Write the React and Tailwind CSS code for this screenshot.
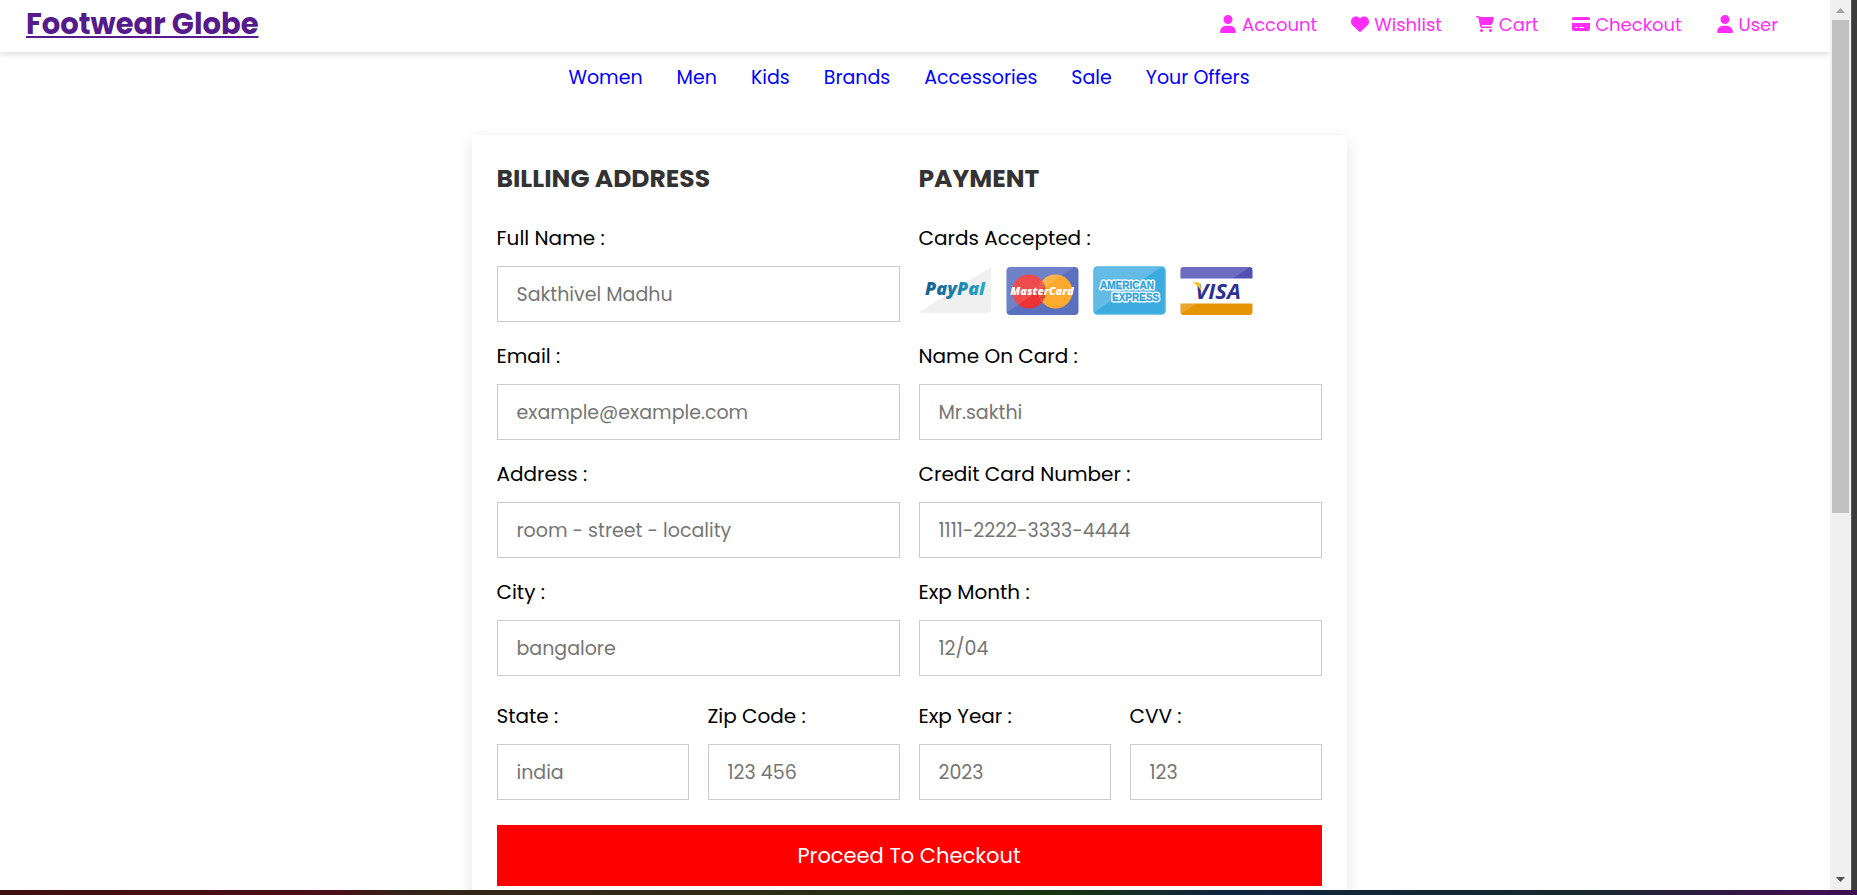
import React from "react";
import { FaUser, FaHeart, FaCartShopping, FaCreditCard } from "react-icons/fa6";

const ACCOUNT_LINKS = [
  { label: "Account", Icon: FaUser },
  { label: "Wishlist", Icon: FaHeart },
  { label: "Cart", Icon: FaCartShopping },
  { label: "Checkout", Icon: FaCreditCard },
  { label: "User", Icon: FaUser },
];

const CATEGORIES = ["Women", "Men", "Kids", "Brands", "Accessories", "Sale", "Your Offers"];

function Field({ id, label, placeholder, type = "text" }) {
  return (
    <div className="flex min-w-0 flex-1 flex-col gap-[13px]">
      <label htmlFor={id} className="text-[20px] leading-[30px] text-black">
        {label}
      </label>
      <input
        id={id}
        type={type}
        placeholder={placeholder}
        className="h-14 w-full border border-[#ccc] bg-white px-[19px] text-[19px] text-black outline-none placeholder:text-[#757575]"
      />
    </div>
  );
}

function PayPal() {
  return (
    <svg viewBox="0 0 73 49" className="h-[49px] w-[73px]" role="img" aria-label="PayPal">
      <defs>
        <linearGradient id="pp" x1="0" x2="1" y1="0" y2="0">
          <stop offset="0" stopColor="#17608f" />
          <stop offset="0.5" stopColor="#1b7fab" />
          <stop offset="1" stopColor="#28a9c9" />
        </linearGradient>
      </defs>
      <path d="M72 1V43a4 4 0 0 1-4 4H4Q2 47 1 45.500Z" fill="#f0f0f0" />
      <text x="36" y="29" textAnchor="middle" fontFamily="Open Sans, sans-serif" fontStyle="italic" fontWeight="800" fontSize="18" fill="url(#pp)">
        PayPal
      </text>
    </svg>
  );
}

function MasterCard() {
  return (
    <svg viewBox="0 0 73 49" className="h-[49px] w-[73px]" role="img" aria-label="MasterCard">
      <defs>
        <clipPath id="mcClip">
          <rect x="0.500" y="1" width="72" height="48" rx="4" />
        </clipPath>
      </defs>
      <g clipPath="url(#mcClip)">
        <rect width="73" height="49" fill="#5a70bf" />
        <circle cx="23" cy="25.500" r="17" fill="#eb3234" />
        <circle cx="49.500" cy="25.500" r="17" fill="#ffa92e" />
        <path d="M36.200 15a17 17 0 0 1 0 21a17 17 0 0 1 0-21Z" fill="#e0523a" />
        <path d="M33.500 19.500h5.500M33 22h6.500M33 29h6.500M33.500 31.500h5.500" stroke="#c93a35" strokeWidth="0.800" />
        <path d="M0 0H70L0 47Z" fill="#fff" opacity="0.13" />
      </g>
      <text x="36" y="28.500" textAnchor="middle" fontFamily="Open Sans, sans-serif" fontStyle="italic" fontWeight="800" fontSize="11" fill="#fff">
        MasterCard
      </text>
    </svg>
  );
}

function Amex() {
  return (
    <svg viewBox="0 0 73 49" className="h-[49px] w-[73px]" role="img" aria-label="American Express">
      <defs>
        <clipPath id="axClip">
          <rect x="0.500" y="0.500" width="72" height="48" rx="4" />
        </clipPath>
      </defs>
      <g clipPath="url(#axClip)">
        <rect width="73" height="49" fill="#3cabe0" />
        <path d="M0 0H70L0 47Z" fill="#fff" opacity="0.2" />
        <rect x="0.500" y="0.500" width="72" height="48" rx="4" fill="none" stroke="#58b8e4" strokeWidth="2" />
      </g>
      <g fontFamily="Liberation Sans, sans-serif" fontWeight="700" fontSize="10" strokeLinejoin="round">
        <g fill="#fff" stroke="#fff" strokeWidth="3" aria-hidden="true">
          <text x="7" y="23">AMERICAN</text>
          <text x="19" y="35">EXPRESS</text>
        </g>
        <g fill="#2ea3dd" stroke="#2ea3dd" strokeWidth="0.300">
          <text x="7" y="23">AMERICAN</text>
          <text x="19" y="35">EXPRESS</text>
        </g>
      </g>
    </svg>
  );
}

function Visa() {
  return (
    <svg viewBox="0 0 73 49" className="h-[49px] w-[73px]" role="img" aria-label="Visa">
      <path d="M0.500 12.500V4a3 3 0 0 1 3-3h66a3 3 0 0 1 3 3v8.500Z" fill="#5250b5" />
      <path d="M0.500 37.500h72V46a3 3 0 0 1-3 3h-66a3 3 0 0 1-3-3Z" fill="#e59503" />
      <path d="M0.500 12.500V4a3 3 0 0 1 3-3H70L53 12.500Z" fill="#fff" opacity="0.16" />
      <path d="M0.500 37.500H17L0.500 48Z" fill="#fff" opacity="0.16" />
      <text x="38" y="33" textAnchor="middle" fontFamily="Open Sans, sans-serif" fontStyle="italic" fontWeight="700" fontSize="22" fill="#2f2f91">
        VISA
      </text>
      <path d="M12.500 16.200h5.500q1.700 0 2.100 2l1.500 7.500Q18.500 19.500 12.500 16.200Z" fill="#fbbf24" />
    </svg>
  );
}

function SiteHeader() {
  return (
    <header className="flex h-[52px] shrink-0 items-center justify-between bg-white pr-[52px] pb-1 pl-[26px] shadow-[0_2px_6px_rgba(0,0,0,0.15)]">
      <a href="#home" className="text-[29px] leading-[45px] font-bold text-[#551a8b] underline decoration-2 underline-offset-2">
        Footwear Globe
      </a>
      <nav aria-label="Account" className="flex gap-[34px]">
        {ACCOUNT_LINKS.map(({ label, Icon }) => (
          <a key={label} href={`#${label.toLowerCase()}`} className="flex items-center gap-[5px] text-[18px] leading-[27px] text-[#ff2df7]">
            <Icon className="h-[18px] w-auto" aria-hidden="true" />
            {label}
          </a>
        ))}
      </nav>
    </header>
  );
}

function CategoryNav() {
  return (
    <nav aria-label="Categories" className="flex justify-center gap-[34px] pt-3 text-[19px] leading-[28px] text-[#0000ff]">
      {CATEGORIES.map((name) => (
        <a key={name} href={`#${name.toLowerCase().replace(" ", "-")}`}>
          {name}
        </a>
      ))}
    </nav>
  );
}

function CheckoutForm() {
  return (
    <form className="mx-auto mt-[43px] mb-12 w-full max-w-[875px] bg-white p-[25px] shadow-[0_5px_15px_rgba(0,0,0,0.1)]" onSubmit={(e) => e.preventDefault()}>
      <div className="grid grid-cols-2 gap-[19px]">
        <section className="flex flex-col gap-[19px]">
          <h3 className="mb-[7px] text-[25px] leading-[37px] font-bold text-[#333] uppercase">Billing Address</h3>
          <Field id="name" label="Full Name :" placeholder="Sakthivel Madhu" />
          <Field id="email" label="Email :" placeholder="example@example.com" type="email" />
          <Field id="address" label="Address :" placeholder="room - street - locality" />
          <Field id="city" label="City :" placeholder="bangalore" />
          <div className="mt-[6px] flex gap-[19px]">
            <Field id="state" label="State :" placeholder="india" />
            <Field id="zip" label="Zip Code :" placeholder="123 456" />
          </div>
        </section>
        <section className="flex flex-col gap-[19px]">
          <h3 className="mb-[7px] text-[25px] leading-[37px] font-bold text-[#333] uppercase">Payment</h3>
          <div className="flex flex-col gap-[13px]">
            <span className="text-[20px] leading-[30px] text-black">Cards Accepted :</span>
            <div className="flex h-14 items-start gap-[14px]">
              <PayPal />
              <MasterCard />
              <Amex />
              <Visa />
            </div>
          </div>
          <Field id="card-name" label="Name On Card :" placeholder="Mr.sakthi" />
          <Field id="card-number" label="Credit Card Number :" placeholder="1111-2222-3333-4444" />
          <Field id="exp-month" label="Exp Month :" placeholder="12/04" />
          <div className="mt-[6px] flex gap-[19px]">
            <Field id="exp-year" label="Exp Year :" placeholder="2023" />
            <Field id="cvv" label="CVV :" placeholder="123" />
          </div>
        </section>
      </div>
      <button type="submit" className="mt-[25px] w-full cursor-pointer bg-[#ff0000] py-4 text-[21px] leading-[29px] text-white">
        Proceed To Checkout
      </button>
    </form>
  );
}

function ScrollRail() {
  return (
    <div aria-hidden="true" className="flex w-[21px] shrink-0 flex-col items-center bg-[#f0f0f0]">
      <svg viewBox="0 0 21 20" className="h-5 w-[21px] shrink-0">
        <path d="M6 13L10.500 8L15 13Z" fill="#a3a3a3" />
      </svg>
      <div className="min-h-0 w-full flex-1 px-0.5">
        <div className="h-[58%] bg-[#c1c1c1]" />
      </div>
      <svg viewBox="0 0 21 20" className="h-5 w-[21px] shrink-0">
        <path d="M6 7L10.500 12L15 7Z" fill="#505050" />
      </svg>
    </div>
  );
}

export default function App() {
  return (
    <div className="flex h-screen flex-col overflow-hidden bg-white font-['Poppins','Inter',sans-serif]">
      <div className="flex min-h-0 flex-1">
        <div className="flex min-w-0 flex-1 flex-col overflow-y-auto [scrollbar-width:none]">
          <SiteHeader />
          <main className="pr-3">
            <CategoryNav />
            <CheckoutForm />
          </main>
        </div>
        <ScrollRail />
        <div className="w-[6px] shrink-0 border-l border-[#5a5a5a] bg-[#3b3b39]" />
      </div>
      <div className="h-[5px] shrink-0 bg-[linear-gradient(to_right,#3f0e14_0%,#4a0f1a_18%,#33241a_22%,#2d2c17_40%,#17350f_57%,#0e2540_66%,#16292b_85%,#3d1050_97%)]" />
    </div>
  );
}
